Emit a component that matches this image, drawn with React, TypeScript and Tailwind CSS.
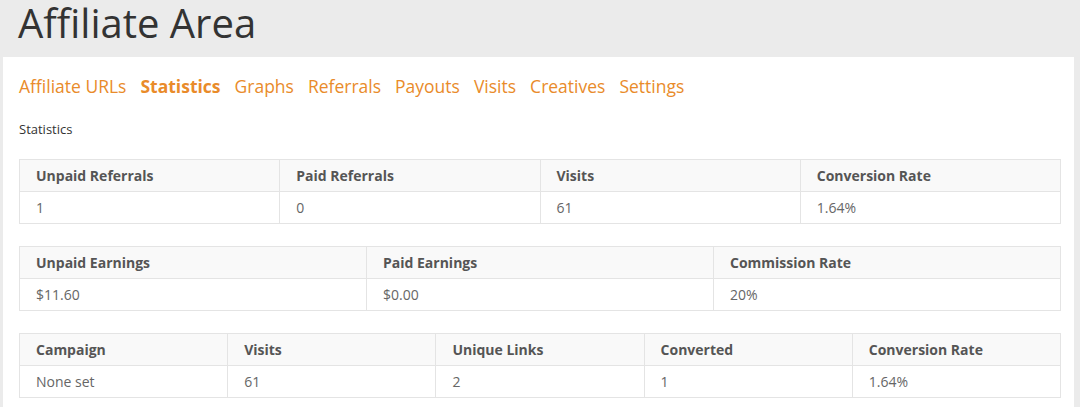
import React from "react";

const tabs = ["Affiliate URLs", "Statistics", "Graphs", "Referrals", "Payouts", "Visits", "Creatives", "Settings"];

const tables: string[][][] = [
  [
    ["Unpaid Referrals", "Paid Referrals", "Visits", "Conversion Rate"],
    ["1", "0", "61", "1.64%"],
  ],
  [
    ["Unpaid Earnings", "Paid Earnings", "Commission Rate"],
    ["$11.60", "$0.00", "20%"],
  ],
  [
    ["Campaign", "Visits", "Unique Links", "Converted", "Conversion Rate"],
    ["None set", "61", "2", "1", "1.64%"],
  ],
];

function StatTable({ head, row }: { head: string[]; row: string[] }) {
  return (
    <table className="w-full table-fixed border-collapse border border-[#e4e4e4] text-[14px] text-[#555]">
      <thead>
        <tr className="bg-[#f9f9f9]">
          {head.map((h) => (
            <th key={h} className="h-[32px] border border-[#e4e4e4] px-[16px] text-left font-bold">
              {h}
            </th>
          ))}
        </tr>
      </thead>
      <tbody>
        <tr>
          {row.map((c, i) => (
            <td key={i} className="h-[32px] border border-[#e4e4e4] px-[16px] text-[#666]">
              {c}
            </td>
          ))}
        </tr>
      </tbody>
    </table>
  );
}

export default function App() {
  return (
    <div className="h-[407px] overflow-hidden bg-[#ebebeb] font-['Open_Sans',sans-serif]">
      <h1 className="h-[57px] pl-[18px] text-[40px] leading-[46px] text-[#333]">Affiliate Area</h1>
      <div className="ml-[3px] mr-[6px] h-[350px] bg-white pl-[16px] pr-[13px]">
        <nav className="flex gap-[14px] pt-[18px] text-[17.5px] leading-[22px] text-[#e98b2a]">
          {tabs.map((t) => (
            <span key={t} className={t === "Statistics" ? "font-bold" : ""}>
              {t}
            </span>
          ))}
        </nav>
        <div className="mt-[23px] text-[13px] leading-[18px] text-[#333]">Statistics</div>
        <div className="mt-[21px] flex flex-col gap-[22px]">
          {tables.map(([head, row], i) => (
            <StatTable key={i} head={head} row={row} />
          ))}
        </div>
      </div>
    </div>
  );
}
